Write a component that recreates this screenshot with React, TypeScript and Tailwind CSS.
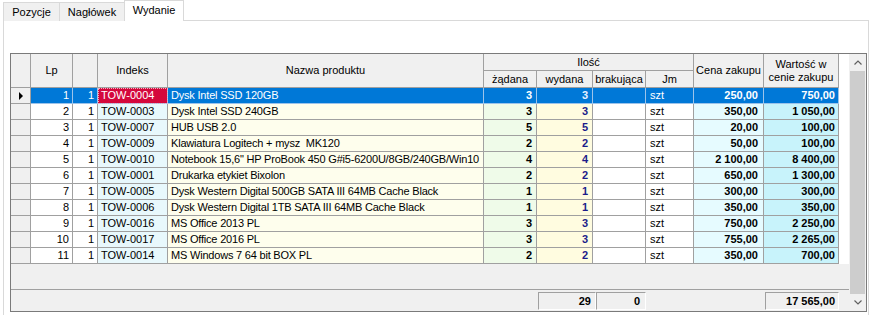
import React from "react";

type Row = {
  lp: number;
  idx: string;
  name: string;
  z: number;
  w: number;
  cena: string;
  wart: string;
};

const rows: Row[] = [
  { lp: 1, idx: "TOW-0004", name: "Dysk Intel SSD 120GB", z: 3, w: 3, cena: "250,00", wart: "750,00" },
  { lp: 2, idx: "TOW-0003", name: "Dysk Intel SSD 240GB", z: 3, w: 3, cena: "350,00", wart: "1 050,00" },
  { lp: 3, idx: "TOW-0007", name: "HUB USB 2.0", z: 5, w: 5, cena: "20,00", wart: "100,00" },
  { lp: 4, idx: "TOW-0009", name: "Klawiatura Logitech + mysz  MK120", z: 2, w: 2, cena: "50,00", wart: "100,00" },
  { lp: 5, idx: "TOW-0010", name: "Notebook 15,6\" HP ProBook 450 G#i5-6200U/8GB/240GB/Win10", z: 4, w: 4, cena: "2 100,00", wart: "8 400,00" },
  { lp: 6, idx: "TOW-0001", name: "Drukarka etykiet Bixolon", z: 2, w: 2, cena: "650,00", wart: "1 300,00" },
  { lp: 7, idx: "TOW-0005", name: "Dysk Western Digital 500GB SATA III 64MB Cache Black", z: 1, w: 1, cena: "300,00", wart: "300,00" },
  { lp: 8, idx: "TOW-0006", name: "Dysk Western Digital 1TB SATA III 64MB Cache Black", z: 1, w: 1, cena: "350,00", wart: "350,00" },
  { lp: 9, idx: "TOW-0016", name: "MS Office 2013 PL", z: 3, w: 3, cena: "750,00", wart: "2 250,00" },
  { lp: 10, idx: "TOW-0017", name: "MS Office 2016 PL", z: 3, w: 3, cena: "755,00", wart: "2 265,00" },
  { lp: 11, idx: "TOW-0014", name: "MS Windows 7 64 bit BOX PL", z: 2, w: 2, cena: "350,00", wart: "700,00" },
];

const GRID =
  "grid grid-cols-[20px_42px_25px_70px_316px_53px_56px_53px_48px_70px_75px]";

const hc =
  "bg-[#f0f0f0] border-r border-b border-[#a0a0a0] flex items-center justify-center text-black";

function Chevron({ down }: { down?: boolean }) {
  return (
    <svg width="8" height="5" viewBox="0 0 8 5">
      <polyline
        points={down ? "0.5,0.5 4,4 7.5,0.5" : "0.5,4.5 4,1 7.5,4.5"}
        fill="none"
        stroke="#606060"
        strokeWidth="1.2"
      />
    </svg>
  );
}

function DataRow({ r, sel }: { r: Row; sel: boolean }) {
  const b = sel ? "border-r border-b border-[#9cc3ea]" : "border-r border-b border-[#a0a0a0]";
  const base = `${b} h-[16px] leading-[15px] whitespace-pre overflow-hidden`;
  const txt = sel ? "text-white" : "text-black";
  return (
    <div className={`${GRID} h-[16px]`}>
      <div className={`border-r border-b border-[#a0a0a0] bg-[#f0f0f0] h-[16px] flex items-center justify-center`}>
        {sel && (
          <svg width="5" height="8" viewBox="0 0 5 8" className="ml-[1px]">
            <polygon points="0,0 4,4 0,8" fill="#000" />
          </svg>
        )}
      </div>
      <div className={`${base} ${sel ? "bg-[#0078d7]" : "bg-white"} ${txt} text-right pr-[3px]`}>{r.lp}</div>
      <div className={`${base} ${sel ? "bg-[#0078d7]" : "bg-white"} ${txt} text-right pr-[3px]`}>1</div>
      <div
        className={`${base} ${
          sel
            ? "bg-[#d4083c] text-white outline-1 outline-dotted outline-offset-[-1px] outline-[#f4b0c0]"
            : "bg-[#e8f8fc] text-black"
        } pl-[3px]`}
      >
        {r.idx}
      </div>
      <div className={`${base} ${sel ? "bg-[#0078d7]" : "bg-[#fefeed]"} ${txt} pl-[3px] tracking-[-0.2px]`}>{r.name}</div>
      <div className={`${base} ${sel ? "bg-[#0078d7]" : "bg-[#effbe9]"} ${txt} font-bold text-right pr-[4px]`}>{r.z}</div>
      <div
        className={`${base} ${sel ? "bg-[#0078d7] text-[#e8f0ff]" : "bg-[#fffce0] text-[#1c1c8a]"} font-bold text-right pr-[4px]`}
      >
        {r.w}
      </div>
      <div className={`${base} ${sel ? "bg-[#0078d7]" : "bg-white"}`}></div>
      <div className={`${base} ${sel ? "bg-[#0078d7]" : "bg-white"} ${txt} pl-[4px]`}>szt</div>
      <div className={`${base} ${sel ? "bg-[#0078d7]" : "bg-[#e6fbff]"} ${txt} font-bold text-right pr-[5px]`}>{r.cena}</div>
      <div className={`${base} ${sel ? "bg-[#0078d7]" : "bg-[#c8f3fb]"} ${txt} font-bold text-right pr-[3px]`}>{r.wart}</div>
    </div>
  );
}

export default function App() {
  return (
    <div className="w-[871px] h-[315px] overflow-hidden bg-white font-['Liberation_Sans',Arial,sans-serif] text-[11px] text-black">
      {/* tabs */}
      <div className="flex items-end h-[21px] pl-[3px]">
        <div className="h-[19px] w-[57px] border border-b-0 border-[#d9d9d9] bg-[#f0f0f0] flex items-center justify-center">
          Pozycje
        </div>
        <div className="h-[19px] w-[66px] -ml-px border border-b-0 border-[#d9d9d9] bg-[#f0f0f0] flex items-center justify-center">
          Nagłówek
        </div>
        <div className="relative z-10 h-[21px] w-[60px] -ml-px border border-b-0 border-[#d9d9d9] bg-white flex items-center justify-center pb-[1px]">
          Wydanie
        </div>
      </div>
      {/* panel */}
      <div className="-mt-px ml-[3px] w-[866px] h-[300px] border border-[#d9d9d9] bg-white pl-[6px] pt-[32px]">
        <div className="flex w-[857px] h-[259px] border border-[#7a7a7a] bg-white">
          <div className="flex flex-col w-[838px]">
            <div className="flex">
              <div className="w-[828px]">
                {/* header */}
                <div className={`${GRID} grid-rows-[17px_17px]`}>
                  <div className={`${hc} row-span-2`}></div>
                  <div className={`${hc} row-span-2`}>Lp</div>
                  <div className={`${hc} row-span-2`}></div>
                  <div className={`${hc} row-span-2`}>Indeks</div>
                  <div className={`${hc} row-span-2`}>Nazwa produktu</div>
                  <div className={`${hc} col-span-4`}>Ilość</div>
                  <div className={`${hc} row-span-2`}>Cena zakupu</div>
                  <div className={`${hc} row-span-2 flex-col leading-[13px] pt-[1px]`}>
                    <span>Wartość w</span>
                    <span>cenie zakupu</span>
                  </div>
                  <div className={hc}>żądana</div>
                  <div className={hc}>wydana</div>
                  <div className={hc}>brakująca</div>
                  <div className={hc}>Jm</div>
                </div>
                {rows.map((r, i) => (
                  <DataRow key={r.lp} r={r} sel={i === 0} />
                ))}
              </div>
              <div className="w-[10px] bg-white"></div>
            </div>
            {/* empty area */}
            <div className="h-[25px] bg-[#f0f0f0]"></div>
            {/* footer */}
            <div className="flex-1 border-t border-[#a0a0a0] bg-[#f0f0f0] flex items-start pt-[2px] pl-[527px]">
              <div className="w-[58px] h-[18px] border-t border-l border-[#a0a0a0] border-b border-r border-b-white border-r-white bg-[#f0f0f0] font-bold text-right pr-[4px] leading-[16px]">
                29
              </div>
              <div className="w-[50px] h-[18px] border-t border-l border-[#a0a0a0] border-b border-r border-b-white border-r-white bg-[#f0f0f0] font-bold text-right pr-[5px] leading-[16px]">
                0
              </div>
              <div className="ml-[119px] w-[74px] h-[18px] border-t border-l border-[#a0a0a0] border-b border-r border-b-white border-r-white bg-[#f0f0f0] font-bold text-right pr-[3px] leading-[16px]">
                17 565,00
              </div>
            </div>
          </div>
          {/* scrollbar */}
          <div className="w-[17px] flex flex-col bg-[#f0f0f0]">
            <div className="h-[17px] flex items-center justify-center">
              <Chevron />
            </div>
            <div className="flex-1 mx-[1px] bg-[#cdcdcd]"></div>
            <div className="h-[17px] flex items-center justify-center">
              <Chevron down />
            </div>
          </div>
        </div>
      </div>
    </div>
  );
}
